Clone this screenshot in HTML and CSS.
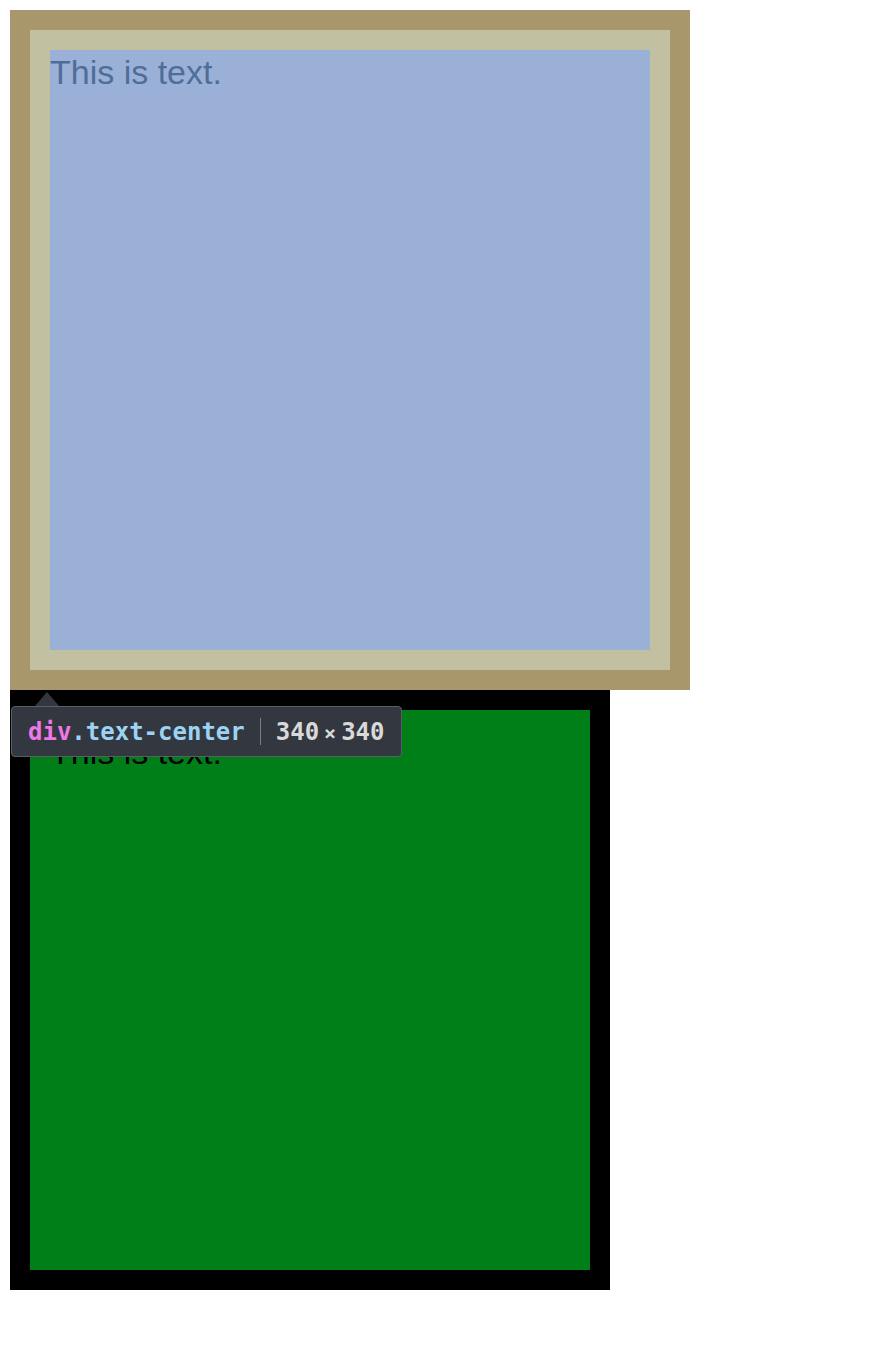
FILE: index.html
```html
<!DOCTYPE html>
<html>
<head>
<meta charset="utf-8">
<link rel="stylesheet" href="styles.css">
</head>
<body>
<div class="page">
  <div class="margin-box">
    <div class="padding-box">
      <div class="content-box">This is text.</div>
    </div>
  </div>
  <div class="green-wrap">
    <div class="green-box">This is text.</div>
    <div class="tooltip">
      <span class="tag">div</span><span class="cls">.text-center</span><span class="sep"></span><span class="dims">340<span class="times">×</span>340</span>
    </div>
  </div>
</div>
</body>
</html>
```

FILE: styles.css
```css
html, body {
  margin: 0;
  padding: 0;
  background: #ffffff;
}

.page {
  padding: 10px;
}

.margin-box {
  width: 640px;
  padding: 20px;
  background: #a8976a;
}

.padding-box {
  padding: 20px;
  background: #c1c0a1;
}

.content-box {
  height: 600px;
  background: #9ab0d7;
  color: #4f6e97;
  font-family: "Liberation Sans", Arial, sans-serif;
  font-size: 34px;
  line-height: 44px;
}

.green-wrap {
  position: relative;
  width: 600px;
}

.green-box {
  width: 520px;
  height: 520px;
  padding: 20px;
  border: 20px solid #000000;
  background: #007f19;
  color: #000000;
  font-family: "Liberation Sans", Arial, sans-serif;
  font-size: 34px;
  line-height: 44px;
}

.tooltip {
  position: absolute;
  left: 1px;
  top: 16px;
  height: 49px;
  display: flex;
  align-items: center;
  padding: 0 16px;
  background: #333740;
  border: 1px solid #5a5e66;
  border-radius: 4px;
  font-family: "DejaVu Sans Mono", "Liberation Mono", monospace;
  font-weight: bold;
  font-size: 24px;
  white-space: nowrap;
}

.tooltip::before {
  content: "";
  position: absolute;
  left: 23px;
  top: -15px;
  width: 0;
  height: 0;
  border-left: 12px solid transparent;
  border-right: 12px solid transparent;
  border-bottom: 14px solid #333740;
}

.tag {
  color: #ee78e6;
}

.cls {
  color: #9dd3f2;
}

.sep {
  display: inline-block;
  width: 1px;
  height: 27px;
  margin: 0 15px;
  background: #7a7d85;
}

.dims {
  color: #d9d9d9;
}

.times {
  display: inline-block;
  margin: 0 5px;
  font-size: 20px;
}
```
